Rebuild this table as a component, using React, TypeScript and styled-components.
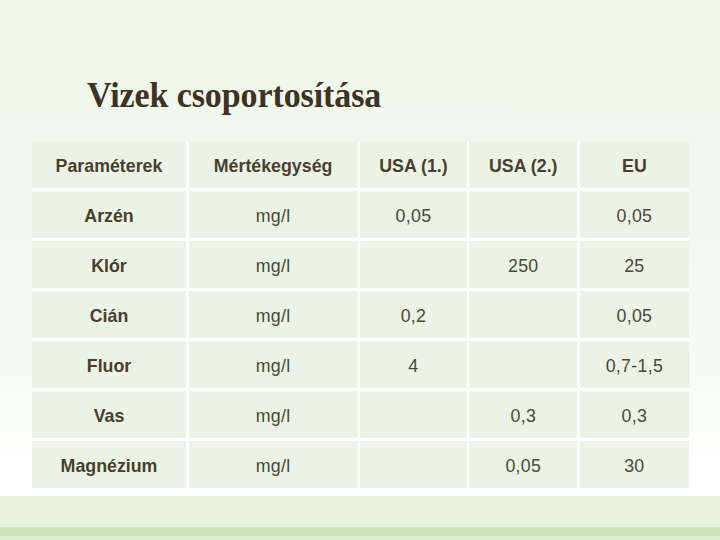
import React from "react";
import styled, { createGlobalStyle } from "styled-components";

const GlobalStyle = createGlobalStyle`
  html, body {
    margin: 0;
    padding: 0;
    background: #ffffff;
  }
  * { box-sizing: border-box; }
`;

const Page = styled.div`
  width: 720px;
  height: 540px;
  display: flex;
  flex-direction: column;
  overflow: hidden;
`;

const Slide = styled.div`
  height: 496px;
  display: flex;
  flex-direction: column;
  padding: 79px 0 0 32px;
  background: linear-gradient(180deg, #eef6e9 0%, #f2f8ee 40%, #f7fbf5 75%, #ffffff 96%);
`;

const Title = styled.h1`
  margin: 0 0 28px 55px;
  font-family: "Liberation Serif", "Times New Roman", serif;
  font-weight: bold;
  font-size: 34px;
  line-height: 1;
  color: #3d3223;
  letter-spacing: -0.1px;
  transform: scaleY(1.08);
  transform-origin: 0 70%;
`;

const Table = styled.div`
  width: 657px;
  display: grid;
  grid-template-columns: 154px 169px 106.5px 108px 109px;
  grid-auto-rows: 47.4px;
  gap: 2.6px 2.6px;
  background: #ffffff;
`;

const Cell = styled.div<{ $bold?: boolean }>`
  background: #eaf3e6;
  display: flex;
  align-items: center;
  justify-content: center;
  font-family: "Liberation Sans", Arial, sans-serif;
  font-size: 17.8px;
  font-weight: ${(p) => (p.$bold ? "bold" : "normal")};
  color: ${(p) => (p.$bold ? "#4a3e2e" : "#4b4838")};
  letter-spacing: ${(p) => (p.$bold ? "0" : "0.3px")};
  padding-top: 4px;
`;

const FooterLight = styled.div`
  height: 31px;
  background: #e6f2db;
`;

const FooterBand = styled.div`
  height: 9px;
  background: #c9e5b3;
`;

const FooterEdge = styled.div`
  height: 4px;
  background: #ddefd1;
`;

const header = ["Paraméterek", "Mértékegység", "USA (1.)", "USA (2.)", "EU"];

const rows: string[][] = [
  ["Arzén", "mg/l", "0,05", "", "0,05"],
  ["Klór", "mg/l", "", "250", "25"],
  ["Cián", "mg/l", "0,2", "", "0,05"],
  ["Fluor", "mg/l", "4", "", "0,7-1,5"],
  ["Vas", "mg/l", "", "0,3", "0,3"],
  ["Magnézium", "mg/l", "", "0,05", "30"],
];

export default function App() {
  return (
    <>
      <GlobalStyle />
      <Page>
        <Slide>
          <Title>Vizek csoportosítása</Title>
          <Table>
            {header.map((h) => (
              <Cell key={h} $bold>
                {h}
              </Cell>
            ))}
            {rows.map((r, i) =>
              r.map((c, j) => (
                <Cell key={`${i}-${j}`} $bold={j === 0}>
                  {c}
                </Cell>
              ))
            )}
          </Table>
        </Slide>
        <FooterLight />
        <FooterBand />
        <FooterEdge />
      </Page>
    </>
  );
}
